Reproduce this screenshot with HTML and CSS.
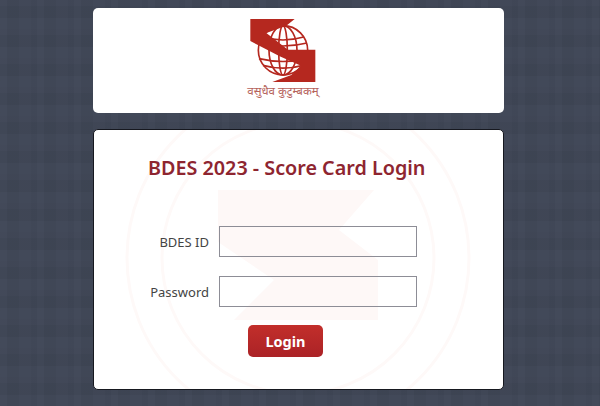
FILE: index.html

```html
<!DOCTYPE html>
<html lang="en">
<head>
  <meta charset="UTF-8" />
  <meta name="viewport" content="width=device-width, initial-scale=1.0" />
  <title>BDES 2023 - Score Card Login</title>
  <link rel="stylesheet" href="styles.css">
</head>
<body>
  <div class="wrap">
    <div class="logo-box">
      <svg class="logo" viewBox="85 50 210 198" aria-label="Logo">
        <circle cx="190" cy="150" r="74" fill="#fff" stroke="#b5281f" stroke-width="5" />
        <g fill="none" stroke="#b5281f" stroke-width="5">
          <ellipse cx="190" cy="150" rx="42" ry="74" />
          <ellipse cx="190" cy="150" rx="13" ry="74" />
          <path d="M128 110 Q190 128 252 110" />
          <path d="M118 128 Q190 146 262 128" />
          <path d="M118 175 Q190 192 262 175" />
          <path d="M130 195 Q190 212 250 195" />
        </g>
        <path fill="#b5281f" d="M92 56 L225 56 L200 76 L140 98 L205 148 L287 148 L287 245 L158 245 L215 224 L244 196 L180 168 L92 122 Z" />
      </svg>
      <div class="motto">वसुधैव कुटुम्बकम्</div>
    </div>

    <div class="login-box">
      <svg class="watermark" viewBox="0 0 350 270">
        <g fill="none" stroke="#fef9f8" stroke-width="3">
          <circle cx="174" cy="128" r="171" />
          <circle cx="174" cy="128" r="136" />
        </g>
        <path fill="#fef8f7" d="M94 60 L250 60 L215 100 L254 130 L254 190 L110 190 L150 150 L94 112 Z" />
      </svg>

      <h2 class="title">BDES 2023 - Score Card Login</h2>

      <form class="login-form">
        <label for="bdesId">BDES ID</label>
        <input type="text" id="bdesId" />
        <label for="password">Password</label>
        <input type="password" id="password" />
        <button type="button" class="btn">Login</button>
      </form>
    </div>
  </div>
</body>
</html>
```

FILE: styles.css

```css
html, body {
  height: 100%;
}
body {
  margin: 0;
  font-family: "Noto Sans", "Open Sans", sans-serif;
  background-color: #3f4656;
  background-image:
    repeating-linear-gradient(90deg, rgba(255,255,255,0.012) 0 7px, rgba(0,0,0,0.018) 7px 19px, rgba(255,255,255,0.008) 19px 31px, rgba(0,0,0,0.012) 31px 37px),
    repeating-linear-gradient(0deg, rgba(255,255,255,0.01) 0 11px, rgba(0,0,0,0.018) 11px 23px, rgba(255,255,255,0.006) 23px 29px);
  overflow: hidden;
}
.wrap {
  width: 411px;
  margin-left: 93px;
  padding-top: 8px;
}
.logo-box {
  height: 105px;
  background: #fff;
  border-radius: 5px;
  box-sizing: border-box;
  padding-top: 9px;
  display: flex;
  flex-direction: column;
  align-items: center;
}
.logo {
  width: 70px;
  height: 66px;
  margin-left: -31px;
  display: block;
}
.motto {
  font-size: 11.5px;
  line-height: 14px;
  margin: 1px 0 0 -31px;
  color: #b5625b;
  white-space: nowrap;
}
.login-box {
  position: relative;
  height: 261px;
  margin-top: 16px;
  background: #fff;
  border: 1px solid #16181f;
  border-radius: 5px;
  box-sizing: border-box;
  overflow: hidden;
}
.watermark {
  position: absolute;
  left: 30px;
  top: 0;
  width: 350px;
  height: 270px;
}
.title {
  position: relative;
  margin: 25px 0 0 54px;
  font-size: 19.75px;
  line-height: 26px;
  font-weight: 600;
  color: #8e2530;
}
.login-form {
  position: relative;
  display: grid;
  grid-template-columns: 115px 198px;
  column-gap: 10px;
  row-gap: 19px;
  margin-top: 45px;
  align-items: center;
}
.login-form label {
  text-align: right;
  font-size: 13px;
  color: #444;
}
.login-form input {
  box-sizing: border-box;
  width: 198px;
  height: 31px;
  border: 1px solid #8d8d96;
  background: transparent;
  margin: 0;
  padding: 0 6px;
}
.btn {
  grid-column: 2;
  justify-self: start;
  margin: -1px 0 0 29px;
  width: 75px;
  height: 32px;
  border: none;
  border-radius: 5px;
  background: linear-gradient(#c22f2b, #ab2226);
  color: #fff;
  font-family: inherit;
  font-size: 14.5px;
  font-weight: 700;
  cursor: pointer;
}
```
